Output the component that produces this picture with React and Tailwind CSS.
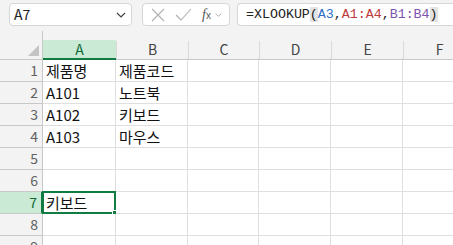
const cols = ["A", "B", "C", "D", "E", "F"];
const widths = ["w-[73px]", "w-[72px]", "w-[71px]", "w-[72px]", "w-[72px]", "w-[72px]"];

const data = {
  1: ["제품명", "제품코드"],
  2: ["A101", "노트북"],
  3: ["A102", "키보드"],
  4: ["A103", "마우스"],
  7: ["키보드", ""],
};

const font = { fontFamily: '"Noto Sans CJK KR", "Noto Sans", sans-serif' };

function Chevron({ className }) {
  return (
    <svg className={className} viewBox="0 0 10 6" fill="none" stroke="currentColor" strokeWidth="1.2">
      <path d="M1 1l4 4 4-4" />
    </svg>
  );
}

function Toolbar() {
  return (
    <div className="relative h-[40px] bg-[#f3f3f3]">
      <div className="flex items-start pt-[3px] pl-[9px]">
        <div className="flex h-[23px] w-[123px] items-center justify-between rounded-[4px] border border-[#d6d6d6] bg-white pl-[4px] pr-[5px]">
          <span className="text-[14px] text-[#222]" style={font}>A7</span>
          <Chevron className="h-[6px] w-[10px] text-[#444]" />
        </div>
        <div className="ml-[10px] flex h-[23px] w-[88px] items-center rounded-[4px] border border-[#d6d6d6] bg-white pl-[8px]">
          <svg className="h-[14px] w-[14px] text-[#b0b0b0]" viewBox="0 0 14 14" stroke="currentColor" strokeWidth="1.1" fill="none">
            <path d="M1 1l12 12M13 1L1 13" />
          </svg>
          <svg className="ml-[10px] h-[13px] w-[17px] text-[#b0b0b0]" viewBox="0 0 17 13" stroke="currentColor" strokeWidth="1.1" fill="none">
            <path d="M1 7l5 5L16 1" />
          </svg>
          <span className="ml-[10px] text-[14px] italic leading-none text-[#555]" style={{ fontFamily: '"Liberation Serif", serif' }}>
            f<span className="text-[10px] not-italic" style={{ fontFamily: '"Liberation Sans", sans-serif' }}>x</span>
          </span>
          <Chevron className="ml-[4px] h-[4px] w-[7px] text-[#999]" />
        </div>
        <div className="ml-[7px] flex h-[23px] flex-1 items-center rounded-l-[4px] border border-r-0 border-[#d6d6d6] bg-white pl-[8px]">
          <span className="text-[13.3px] text-[#222]" style={{ fontFamily: '"Liberation Mono", monospace' }}>
            =XLOOKUP<span className="bg-[#e3e3e3]">(</span>
            <span className="text-[#2f6fc6]">A3</span>,
            <span className="text-[#c0393b]">A1:A4</span>,
            <span className="text-[#7b55b0]">B1:B4</span>
            <span className="bg-[#e3e3e3]">)</span>
          </span>
        </div>
      </div>
      <div className="absolute bottom-0 left-[42px] h-[9px] w-px bg-[#c8c8c8]" />
    </div>
  );
}

function HeaderRow() {
  return (
    <div className="flex h-[20px]">
      <div className="relative w-[43px] shrink-0 border-r border-b border-[#c8c8c8] bg-[#f3f3f3]">
        <svg className="absolute right-[3px] bottom-[3px] h-[11px] w-[11px]" viewBox="0 0 11 11">
          <path d="M11 0V11H0z" fill="#c4c4c4" />
        </svg>
      </div>
      {cols.map((c, i) =>
        c === "A" ? (
          <div
            key={c}
            className={`${widths[i]} shrink-0 border-b-2 border-[#107c41] bg-[#caead6] text-center text-[14px] leading-[18px] text-[#0f6b3a]`}
            style={font}
          >
            {c}
          </div>
        ) : (
          <div
            key={c}
            className={`${widths[i]} flex shrink-0 border-b border-[#c8c8c8] bg-[#f3f3f3]`}
          >
            <div className="h-[18px] w-px self-end bg-[#dadada]" />
            <div className="flex-1 text-center text-[14px] leading-[19px] text-[#444]" style={font}>
              {c}
            </div>
          </div>
        )
      )}
    </div>
  );
}

function Row({ n }) {
  const vals = data[n] || [];
  const sel = n === 7;
  return (
    <div className="flex h-[22px]">
      <div
        className={`w-[43px] shrink-0 border-b pr-[4px] text-right text-[14px] leading-[21px] ${
          sel
            ? "border-r-2 border-r-[#107c41] border-b-[#c8c8c8] bg-[#caead6] text-[#0f6b3a]"
            : "border-r border-[#c8c8c8] bg-[#f3f3f3] text-[#616161]"
        }`}
        style={font}
      >
        {n}
      </div>
      {cols.map((c, i) => (
        <div
          key={c}
          className={`${widths[i]} relative shrink-0 border-r border-b border-[#dfdfdf] bg-white pl-[3px] text-[15px] leading-[21px] text-[#111]`}
          style={font}
        >
          {vals[i] || ""}
          {sel && i === 0 && (
            <div className="absolute -top-px -left-px h-[23px] w-[74px] border-2 border-[#107c41]">
              <div className="absolute -right-[4px] -bottom-[4px] h-[6px] w-[6px] border border-white bg-[#107c41]" />
            </div>
          )}
        </div>
      ))}
    </div>
  );
}

export default function App() {
  return (
    <div className="h-[245px] w-[453px] overflow-hidden bg-white">
      <Toolbar />
      <HeaderRow />
      {[1, 2, 3, 4, 5, 6, 7, 8, 9].map((n) => (
        <Row key={n} n={n} />
      ))}
    </div>
  );
}
